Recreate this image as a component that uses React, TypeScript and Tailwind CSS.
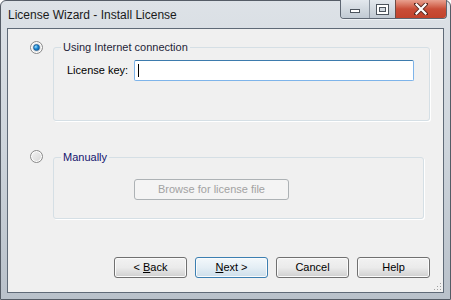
import React from 'react';

const font = { fontFamily: '"Liberation Sans", Arial, sans-serif' };

const Radio: React.FC<{ checked?: boolean }> = ({ checked }) => (
  <div className="w-[13px] h-[13px] rounded-full border border-[#8a8a8a] bg-gradient-to-br from-[#f4f4f4] to-[#d6d6d6] flex items-center justify-center shadow-[inset_0_0_0_1px_#ffffff]">
    {checked && (
      <div className="w-[7px] h-[7px] rounded-full bg-[radial-gradient(circle_at_35%_35%,#9fe0ff_0%,#1b8ad6_45%,#0c4f94_100%)] border border-[#1d5f99]" />
    )}
  </div>
);

const Btn: React.FC<{ children: React.ReactNode; primary?: boolean }> = ({ children, primary }) => (
  <div
    className={`w-[73px] h-[21px] rounded-[3px] border flex items-center justify-center text-[11px] text-black shadow-[inset_0_0_0_1px_#fbfbfb] ${
      primary
        ? 'border-[#3c7fb1] bg-gradient-to-b from-[#f3f8fb] via-[#e4eef5] to-[#cddeea]'
        : 'border-[#707070] bg-gradient-to-b from-[#f2f2f2] via-[#ebebeb] to-[#cfcfcf]'
    }`}
  >
    <span className="whitespace-pre">{children}</span>
  </div>
);

export default function App() {
  return (
    <div className="w-[451px] h-[300px] bg-white" style={font}>
      <div className="w-[451px] h-[300px] rounded-t-[6px] border border-[#555c66] bg-gradient-to-b from-[#dde2e7] via-[#cdd4db] to-[#b9c1ca] flex flex-col">
        {/* title bar */}
        <div className="h-[27px] flex items-start justify-between">
          <span className="text-[12px] text-[#1a1a1a] pl-[7px] pt-[7px] leading-[14px]">License Wizard - Install License</span>
          <div className="flex h-[19px] mr-[3px] -mt-px rounded-b-[4px] border border-t-0 border-[#5d6672] overflow-hidden shadow-[0_1px_0_#eef1f4]">
            <div className="w-[29px] bg-gradient-to-b from-[#e3e8ed] to-[#c1cad3] border-r border-[#8a939e] flex items-center justify-center">
              <div className="w-[10px] h-[4px] bg-white border border-[#4b535c] mt-[4px]" />
            </div>
            <div className="w-[26px] bg-gradient-to-b from-[#e3e8ed] to-[#c1cad3] border-r border-[#6e4b44] flex items-center justify-center">
              <div className="w-[11px] h-[9px] border-[2px] border-white outline outline-1 outline-[#4b535c] shadow-[inset_0_0_0_1px_#4b535c]" />
            </div>
            <div className="w-[50px] bg-gradient-to-b from-[#e8a08f] via-[#c94d37] to-[#c2432c] flex items-center justify-center">
              <svg width="14" height="12" viewBox="0 0 14 12">
                <path d="M2 1 L12 11 M12 1 L2 11" stroke="#5a2a22" strokeWidth="4" strokeLinecap="square" />
                <path d="M2.5 1.5 L11.5 10.5 M11.5 1.5 L2.5 10.5" stroke="#ffffff" strokeWidth="2.2" strokeLinecap="square" />
              </svg>
            </div>
          </div>
        </div>

        {/* client area */}
        <div className="mx-[6px] h-[265px] border border-[#5f6a77] bg-[#f0f0f0] relative">
          <div className="pt-[10px] pl-[22px]">
            <div className="flex items-start gap-[10px]">
              <div className="mt-[2px]">
                <Radio checked />
              </div>
              <fieldset className="w-[377px] h-[82px] rounded-[3px] border border-[#d5dfe5] shadow-[1px_1px_0_#ffffff]">
                <legend className="ml-[7px] px-[2px] text-[11px] leading-[16px] text-[#1e1e38]">Using Internet connection</legend>
                <div className="flex items-center mt-[5px] pl-[13px]">
                  <span className="text-[11px] text-black w-[67px]">License key:</span>
                  <div className="w-[280px] h-[21px] rounded-[2px] border border-[#7eb4ea] border-t-[#3d7bad] bg-white flex items-center pl-[3px]">
                    <div className="w-px h-[13px] bg-black" />
                  </div>
                </div>
              </fieldset>
            </div>

            <div className="flex items-start gap-[10px] mt-[28px]">
              <div className="mt-[1px]">
                <Radio />
              </div>
              <fieldset className="w-[371px] h-[70px] rounded-[3px] border border-[#d5dfe5] shadow-[1px_1px_0_#ffffff]">
                <legend className="ml-[7px] px-[2px] text-[11px] leading-[16px] text-[#14146e]">Manually</legend>
                <div className="ml-[80px] mt-[14px] w-[155px] h-[21px] rounded-[3px] border border-[#adb2b5] bg-[#f4f4f4] flex items-center justify-center text-[11px] text-[#a2a2a2]">
                  Browse for license file
                </div>
              </fieldset>
            </div>
          </div>

          <div className="flex justify-end gap-[8px] pr-[13px] mt-[38px]">
            <Btn>{'< '}<u>B</u>ack</Btn>
            <Btn primary><u>N</u>{'ext >'}</Btn>
            <Btn>Cancel</Btn>
            <Btn>Help</Btn>
          </div>

          <svg className="absolute right-[1px] bottom-[1px]" width="10" height="10" viewBox="0 0 10 10">
            {[[8, 2], [8, 5], [5, 5], [8, 8], [5, 8], [2, 8]].map(([x, y], i) => (
              <rect key={i} x={x} y={y} width="1" height="1" fill="#a0a0a0" />
            ))}
          </svg>
        </div>
      </div>
    </div>
  );
}
